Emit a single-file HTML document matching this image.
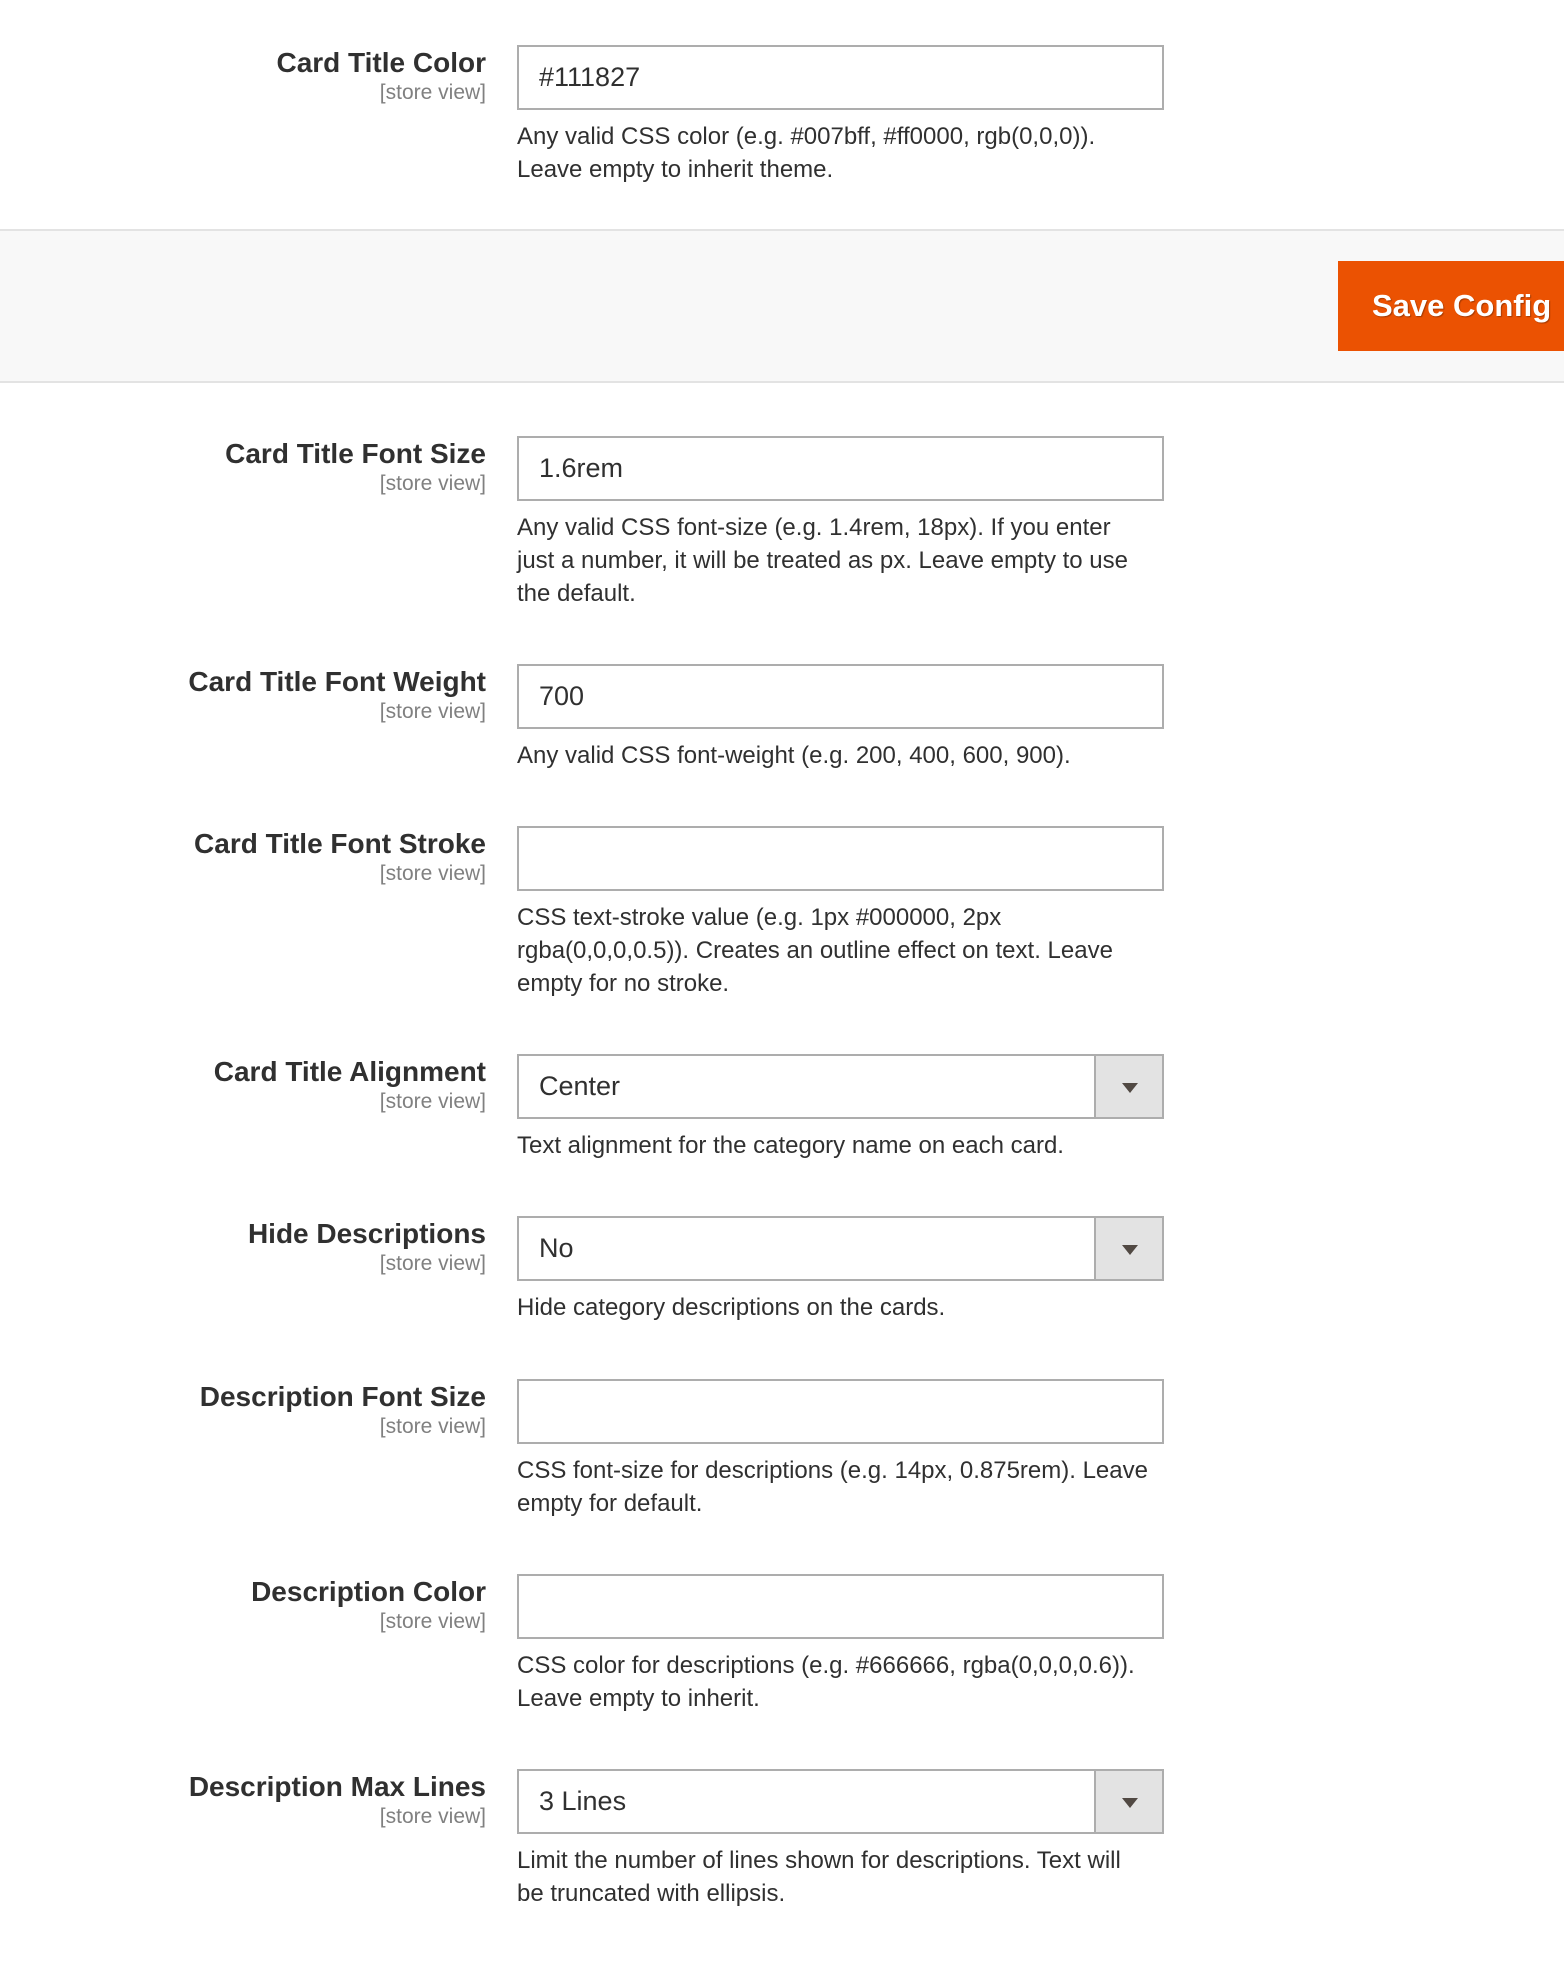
<!DOCTYPE html>
<html><head><meta charset="utf-8"><style>
body{margin:0;width:1564px;height:1974px;background:#fff;font-family:"Liberation Sans",sans-serif;color:#303030;position:relative;overflow:hidden}
.band{position:absolute;left:0;top:229px;width:1564px;height:150px;background:#f8f8f8;border-top:2px solid #e3e3e3;border-bottom:2px solid #e3e3e3}
.btn{position:absolute;left:1338px;top:261px;width:240px;height:90px;background:#eb5202;color:#fff;font-weight:bold;font-size:31px;line-height:90px;padding-left:34px;box-sizing:border-box;white-space:nowrap;text-shadow:1px 1px 1px rgba(0,0,0,.3)}
.lab{position:absolute;right:1078px;text-align:right;white-space:nowrap}
.lab b{display:block;font-size:28px;line-height:34px;font-weight:bold;color:#303030}
.lab span{display:block;font-size:21px;line-height:26px;color:#808080}
.in{position:absolute;left:517px;width:647px;height:65px;box-sizing:border-box;border:2px solid #adadad;background:#fff;font-size:27px;line-height:61px;padding-left:20px;white-space:nowrap}
.sel .ar{position:absolute;right:0;top:0;width:66px;height:61px;background:#e3e3e3;border-left:2px solid #adadad}
.sel .ar:after{content:"";position:absolute;left:26px;top:27px;border-left:8px solid transparent;border-right:8px solid transparent;border-top:10px solid #514943}
.note{position:absolute;left:517px;font-size:24px;line-height:33px;white-space:nowrap;color:#303030}
</style></head><body>

<div class="lab" style="top:46px"><b>Card Title Color</b><span>[store view]</span></div>
<div class="in" style="top:45px">#111827</div>
<div class="note" style="top:120px">Any valid CSS color (e.g. #007bff, #ff0000, rgb(0,0,0)).<br>Leave empty to inherit theme.</div>

<div class="band"></div>
<div class="btn">Save Config</div>

<div class="lab" style="top:437px"><b>Card Title Font Size</b><span>[store view]</span></div>
<div class="in" style="top:436px">1.6rem</div>
<div class="note" style="top:511px">Any valid CSS font-size (e.g. 1.4rem, 18px). If you enter<br>just a number, it will be treated as px. Leave empty to use<br>the default.</div>

<div class="lab" style="top:665px"><b>Card Title Font Weight</b><span>[store view]</span></div>
<div class="in" style="top:664px">700</div>
<div class="note" style="top:739px">Any valid CSS font-weight (e.g. 200, 400, 600, 900).</div>

<div class="lab" style="top:827px"><b>Card Title Font Stroke</b><span>[store view]</span></div>
<div class="in" style="top:826px"></div>
<div class="note" style="top:901px">CSS text-stroke value (e.g. 1px #000000, 2px<br>rgba(0,0,0,0.5)). Creates an outline effect on text. Leave<br>empty for no stroke.</div>

<div class="lab" style="top:1055px"><b>Card Title Alignment</b><span>[store view]</span></div>
<div class="in sel" style="top:1054px">Center<div class="ar"></div></div>
<div class="note" style="top:1129px">Text alignment for the category name on each card.</div>

<div class="lab" style="top:1217px"><b>Hide Descriptions</b><span>[store view]</span></div>
<div class="in sel" style="top:1216px">No<div class="ar"></div></div>
<div class="note" style="top:1291px">Hide category descriptions on the cards.</div>

<div class="lab" style="top:1380px"><b>Description Font Size</b><span>[store view]</span></div>
<div class="in" style="top:1379px"></div>
<div class="note" style="top:1454px">CSS font-size for descriptions (e.g. 14px, 0.875rem). Leave<br>empty for default.</div>

<div class="lab" style="top:1575px"><b>Description Color</b><span>[store view]</span></div>
<div class="in" style="top:1574px"></div>
<div class="note" style="top:1649px">CSS color for descriptions (e.g. #666666, rgba(0,0,0,0.6)).<br>Leave empty to inherit.</div>

<div class="lab" style="top:1770px"><b>Description Max Lines</b><span>[store view]</span></div>
<div class="in sel" style="top:1769px">3 Lines<div class="ar"></div></div>
<div class="note" style="top:1844px">Limit the number of lines shown for descriptions. Text will<br>be truncated with ellipsis.</div>

</body></html>
